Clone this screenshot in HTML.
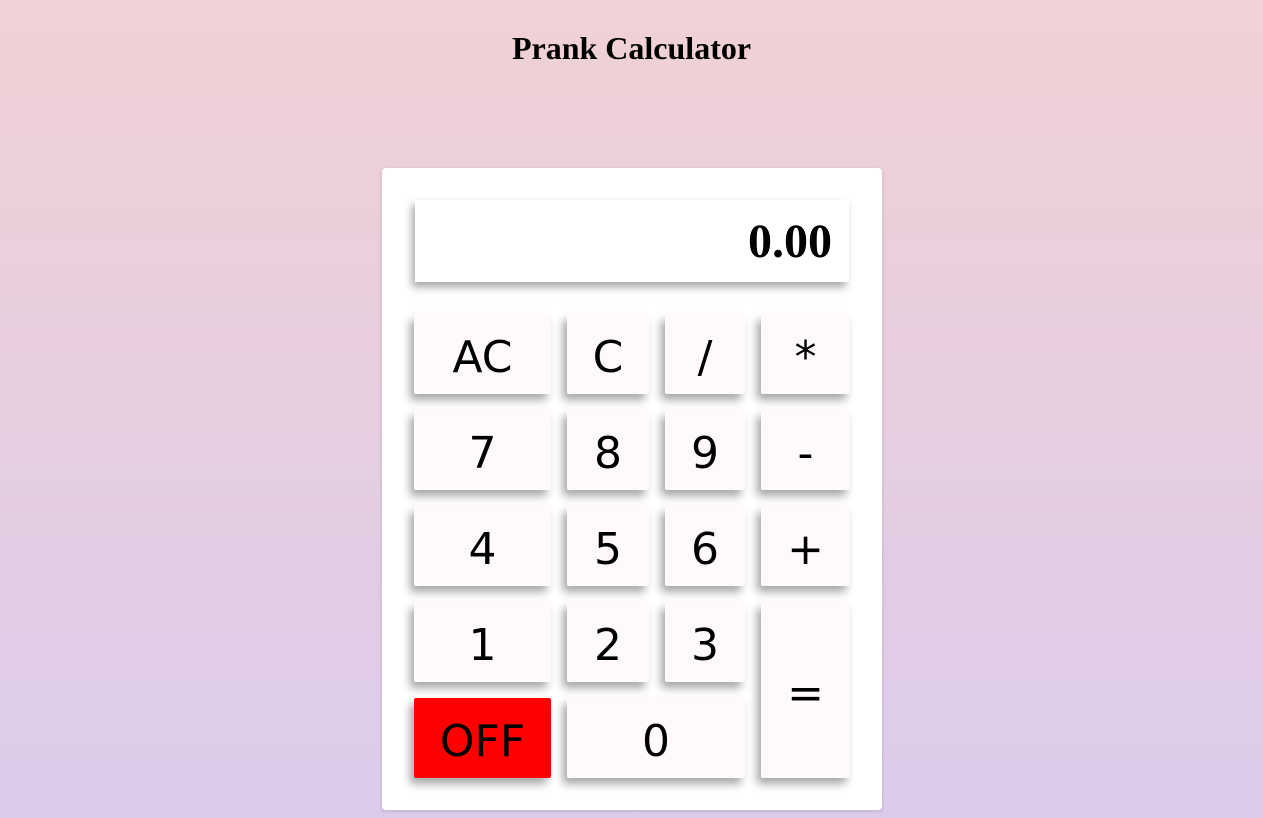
<!DOCTYPE html>
<html><head><style>
html,body{margin:0;padding:0;width:1263px;height:818px;overflow:hidden}
body{background:linear-gradient(#f0d1d5,#dccbeb);font-family:"DejaVu Sans",Verdana,sans-serif;position:relative}
h1{position:absolute;top:30px;left:0;width:1263px;text-align:center;margin:0;font:bold 32px "Liberation Serif",serif}
.card{position:absolute;left:382px;top:168px;width:500px;height:642px;background:#fff;border-radius:4px;box-shadow:0 1px 4px rgba(0,0,0,.15)}
.disp{position:absolute;left:415px;top:200px;width:434px;height:82px;background:#fff;box-shadow:-3px 5px 8px rgba(0,0,0,.35);box-sizing:border-box;padding-right:17px;text-align:right;font:bold 48px "Liberation Serif",serif;line-height:84px}
.b{position:absolute;background:#fffaf9;box-shadow:-4px 6px 9px rgba(0,0,0,.35);border-radius:2px;text-align:center;font-size:44px;line-height:88px;color:#000}
</style></head><body>
<h1>Prank Calculator</h1>
<div class="card"></div>
<div class="disp">0.00</div>
<div class="b" style="left:414px;top:314px;width:137px;height:80px">AC</div>
<div class="b" style="left:567px;top:314px;width:82px;height:80px">C</div>
<div class="b" style="left:665px;top:314px;width:80px;height:80px">/</div>
<div class="b" style="left:761px;top:314px;width:89px;height:80px">*</div>
<div class="b" style="left:414px;top:410px;width:137px;height:80px">7</div>
<div class="b" style="left:567px;top:410px;width:82px;height:80px">8</div>
<div class="b" style="left:665px;top:410px;width:80px;height:80px">9</div>
<div class="b" style="left:761px;top:410px;width:89px;height:80px">-</div>
<div class="b" style="left:414px;top:506px;width:137px;height:80px">4</div>
<div class="b" style="left:567px;top:506px;width:82px;height:80px">5</div>
<div class="b" style="left:665px;top:506px;width:80px;height:80px">6</div>
<div class="b" style="left:761px;top:506px;width:89px;height:80px">+</div>
<div class="b" style="left:414px;top:602px;width:137px;height:80px">1</div>
<div class="b" style="left:567px;top:602px;width:82px;height:80px">2</div>
<div class="b" style="left:665px;top:602px;width:80px;height:80px">3</div>
<div class="b" style="left:761px;top:602px;width:89px;height:176px;line-height:184px">=</div>
<div class="b" style="left:414px;top:698px;width:137px;height:80px;background:#f00">OFF</div>
<div class="b" style="left:567px;top:698px;width:178px;height:80px">0</div>
</body></html>
